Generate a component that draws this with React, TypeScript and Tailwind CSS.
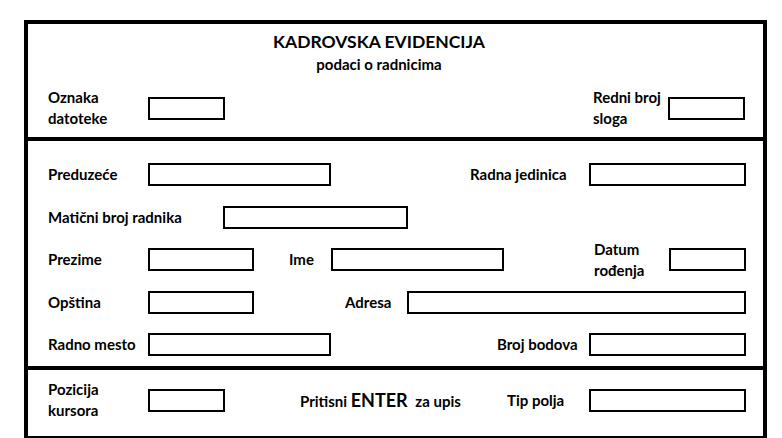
import React from "react";

const Box = ({ w }: { w: string }) => (
  <div className={`h-[23px] shrink-0 border-2 border-black bg-white ${w}`} />
);

const Label = ({ w, children }: { w: string; children: React.ReactNode }) => (
  <div className={`shrink-0 text-[15px] font-bold leading-[21px] ${w}`}>{children}</div>
);

const Gap = ({ w }: { w: string }) => <div className={`shrink-0 ${w}`} />;

export default function App() {
  return (
    <div
      className="h-[438px] w-[782px] overflow-hidden bg-white text-black"
      style={{ fontFamily: "Lato, 'Open Sans', sans-serif" }}
    >
      <div className="ml-[24px] mt-[20px] flex w-[743px] flex-col border-x-4 border-t-4 border-b-2 border-black">
        {/* zaglavlje */}
        <div className="h-[113px] pl-[20px] pr-[18px]">
          <div className="mr-[35px] flex flex-col items-center pt-[7px]">
            <div className="text-[17.5px] font-bold leading-[21px]">KADROVSKA EVIDENCIJA</div>
            <div className="mt-[3px] text-[15px] font-bold leading-[18px]">podaci o radnicima</div>
          </div>
          <div className="mt-[14px] flex items-center">
            <Label w="w-[100px]">
              Oznaka
              <br />
              datoteke
            </Label>
            <Box w="w-[77px]" />
            <div className="flex-1" />
            <Label w="w-[75px]">
              Redni broj
              <br />
              sloga
            </Label>
            <Box w="w-[77px]" />
          </div>
        </div>

        {/* podaci */}
        <div className="flex h-[229px] flex-col gap-[19.5px] border-t-4 border-black pl-[20px] pr-[17px] pt-[22px]">
          <div className="flex h-[23px] items-center">
            <Label w="w-[100px]">Preduzeće</Label>
            <Box w="w-[183px]" />
            <Gap w="w-[139px]" />
            <Label w="w-[119px]">Radna jedinica</Label>
            <Box w="w-[157px]" />
          </div>
          <div className="flex h-[23px] items-center">
            <Label w="w-[175px]">Matični broj radnika</Label>
            <Box w="w-[185px]" />
          </div>
          <div className="flex h-[23px] items-center">
            <Label w="w-[100px]">Prezime</Label>
            <Box w="w-[106px]" />
            <Gap w="w-[35px]" />
            <Label w="w-[42px]">Ime</Label>
            <Box w="w-[173px]" />
            <Gap w="w-[90px]" />
            <Label w="w-[75px]">
              Datum
              <br />
              rođenja
            </Label>
            <Box w="w-[77px]" />
          </div>
          <div className="flex h-[23px] items-center">
            <Label w="w-[100px]">Opština</Label>
            <Box w="w-[106px]" />
            <Gap w="w-[91px]" />
            <Label w="w-[62px]">Adresa</Label>
            <Box w="w-[339px]" />
          </div>
          <div className="flex h-[23px] items-center">
            <Label w="w-[100px]">Radno mesto</Label>
            <Box w="w-[183px]" />
            <Gap w="w-[166px]" />
            <Label w="w-[92px]">Broj bodova</Label>
            <Box w="w-[157px]" />
          </div>
        </div>

        {/* status */}
        <div className="flex h-[70px] items-start border-t-4 border-black pl-[20px] pr-[18px] pt-[9px]">
          <div className="flex items-center">
            <Label w="w-[100px]">
              Pozicija
              <br />
              kursora
            </Label>
            <Box w="w-[77px]" />
            <Gap w="w-[75px]" />
            <div className="w-[207px] shrink-0 text-[15px] font-bold">
              Pritisni <span className="mr-[4px] text-[18px]">ENTER</span> za upis
            </div>
            <Label w="w-[82px]">Tip polja</Label>
            <Box w="w-[157px]" />
          </div>
        </div>
      </div>
    </div>
  );
}
